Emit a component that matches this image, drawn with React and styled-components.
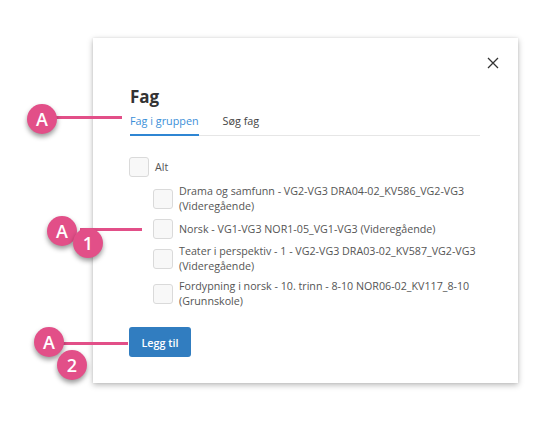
import React from "react";
import styled, { createGlobalStyle } from "styled-components";

const GlobalStyle = createGlobalStyle`
  html, body { margin: 0; padding: 0; background: #ffffff; }
  body { font-family: "Open Sans", "Noto Sans", sans-serif; }
  * { box-sizing: border-box; }
`;

const Page = styled.div`
  position: relative;
  width: 549px;
  height: 430px;
  padding: 38px 0 0 93px;
  background: #fff;
  overflow: hidden;
`;

const Modal = styled.div`
  position: relative;
  width: 425px;
  height: 345px;
  background: #fff;
  box-shadow: 0 2px 6px rgba(0, 0, 0, 0.28), 0 0 2px rgba(0, 0, 0, 0.08);
  padding: 47px 38px 0 37px;
  display: flex;
  flex-direction: column;
`;

const Close = styled.button`
  position: absolute;
  top: 19px;
  right: 19px;
  width: 12px;
  height: 12px;
  padding: 0;
  border: 0;
  background: transparent;
  display: flex;
  cursor: pointer;
`;

const Title = styled.h2`
  margin: 0;
  font-size: 17px;
  line-height: 23px;
  font-weight: 700;
  color: #333;
`;

const Tabs = styled.div`
  display: flex;
  gap: 24px;
  margin-top: 5px;
  border-bottom: 1px solid #e6e6e6;
`;

const Tab = styled.div`
  font-size: 10.8px;
  line-height: 15px;
  padding-bottom: 6px;
  margin-bottom: -1px;
  color: ${(p) => (p.$active ? "#3b8fd8" : "#444")};
  border-bottom: 2px solid ${(p) => (p.$active ? "#2f86d3" : "transparent")};
`;

const List = styled.div`
  display: flex;
  flex-direction: column;
  gap: 5px;
  margin-top: 21px;
`;

const Row = styled.label`
  display: flex;
  align-items: center;
  gap: 6px;
  padding-left: ${(p) => (p.$indent ? "24px" : "0")};
  margin-left: -1px;
  margin-bottom: ${(p) => (p.$top ? "2px" : "0")};
`;

const Box = styled.span`
  flex: none;
  width: 20px;
  height: 20px;
  border: 1px solid #dadada;
  border-radius: 3px;
  background: #f8f8f8;
`;

const Label = styled.span`
  display: flex;
  flex-direction: column;
  font-size: 10.7px;
  line-height: 15px;
  color: #555;
  white-space: nowrap;
`;

const Button = styled.button`
  margin-top: 18px;
  margin-left: -1px;
  width: 62px;
  height: 30px;
  border: 0;
  border-radius: 3px;
  background: #317dc0;
  color: #fff;
  font-family: "Open Sans", sans-serif;
  font-size: 10.8px;
  font-weight: 600;
  padding: 0;
  cursor: pointer;
`;

const PINK = "#e24f88";

const Bubble = styled.div`
  position: absolute;
  left: ${(p) => p.$x - 15}px;
  top: ${(p) => p.$y - 15}px;
  width: 30px;
  height: 30px;
  border-radius: 50%;
  background: ${PINK};
  color: #fff;
  font-family: "Open Sans", sans-serif;
  font-size: 18px;
  font-weight: 600;
  display: flex;
  align-items: center;
  justify-content: center;
  box-shadow: 0 3px 5px rgba(0, 0, 0, 0.4);
  z-index: 2;
`;

const Leader = styled.div`
  position: absolute;
  left: ${(p) => p.$x1}px;
  top: ${(p) => p.$y - 1.5}px;
  width: ${(p) => p.$x2 - p.$x1}px;
  height: 3px;
  background: ${PINK};
  z-index: 1;
`;

const items = [
  { lines: ["Drama og samfunn - VG2-VG3 DRA04-02_KV586_VG2-VG3", "(Videregående)"] },
  { lines: ["Norsk - VG1-VG3 NOR1-05_VG1-VG3 (Videregående)"] },
  { lines: ["Teater i perspektiv - 1 - VG2-VG3 DRA03-02_KV587_VG2-VG3", "(Videregående)"] },
  { lines: ["Fordypning i norsk - 10. trinn - 8-10 NOR06-02_KV117_8-10", "(Grunnskole)"] },
];

export default function App() {
  return (
    <>
      <GlobalStyle />
      <Page>
        <Modal>
          <Close aria-label="Lukk">
            <svg width="12" height="12" viewBox="0 0 12 12">
              <path d="M1 1 L11 11 M11 1 L1 11" stroke="#333" strokeWidth="1.3" fill="none" />
            </svg>
          </Close>
          <Title>Fag</Title>
          <Tabs>
            <Tab $active>Fag i gruppen</Tab>
            <Tab>Søg fag</Tab>
          </Tabs>
          <List>
            <Row $top>
              <Box />
              <Label>Alt</Label>
            </Row>
            {items.map((it, i) => (
              <Row key={i} $indent>
                <Box />
                <Label>
                  {it.lines.map((l, j) => (
                    <span key={j}>{l}</span>
                  ))}
                </Label>
              </Row>
            ))}
          </List>
          <div>
            <Button>Legg til</Button>
          </div>
        </Modal>

        <Leader $x1={45} $x2={122} $y={117} />
        <Bubble $x={42} $y={119}>A</Bubble>

        <Leader $x1={80} $x2={142} $y={229.5} />
        <Bubble $x={62} $y={231}>A</Bubble>
        <Bubble $x={88} $y={243}>1</Bubble>

        <Leader $x1={55} $x2={128} $y={343} />
        <Bubble $x={49} $y={342}>A</Bubble>
        <Bubble $x={72} $y={365}>2</Bubble>
      </Page>
    </>
  );
}
